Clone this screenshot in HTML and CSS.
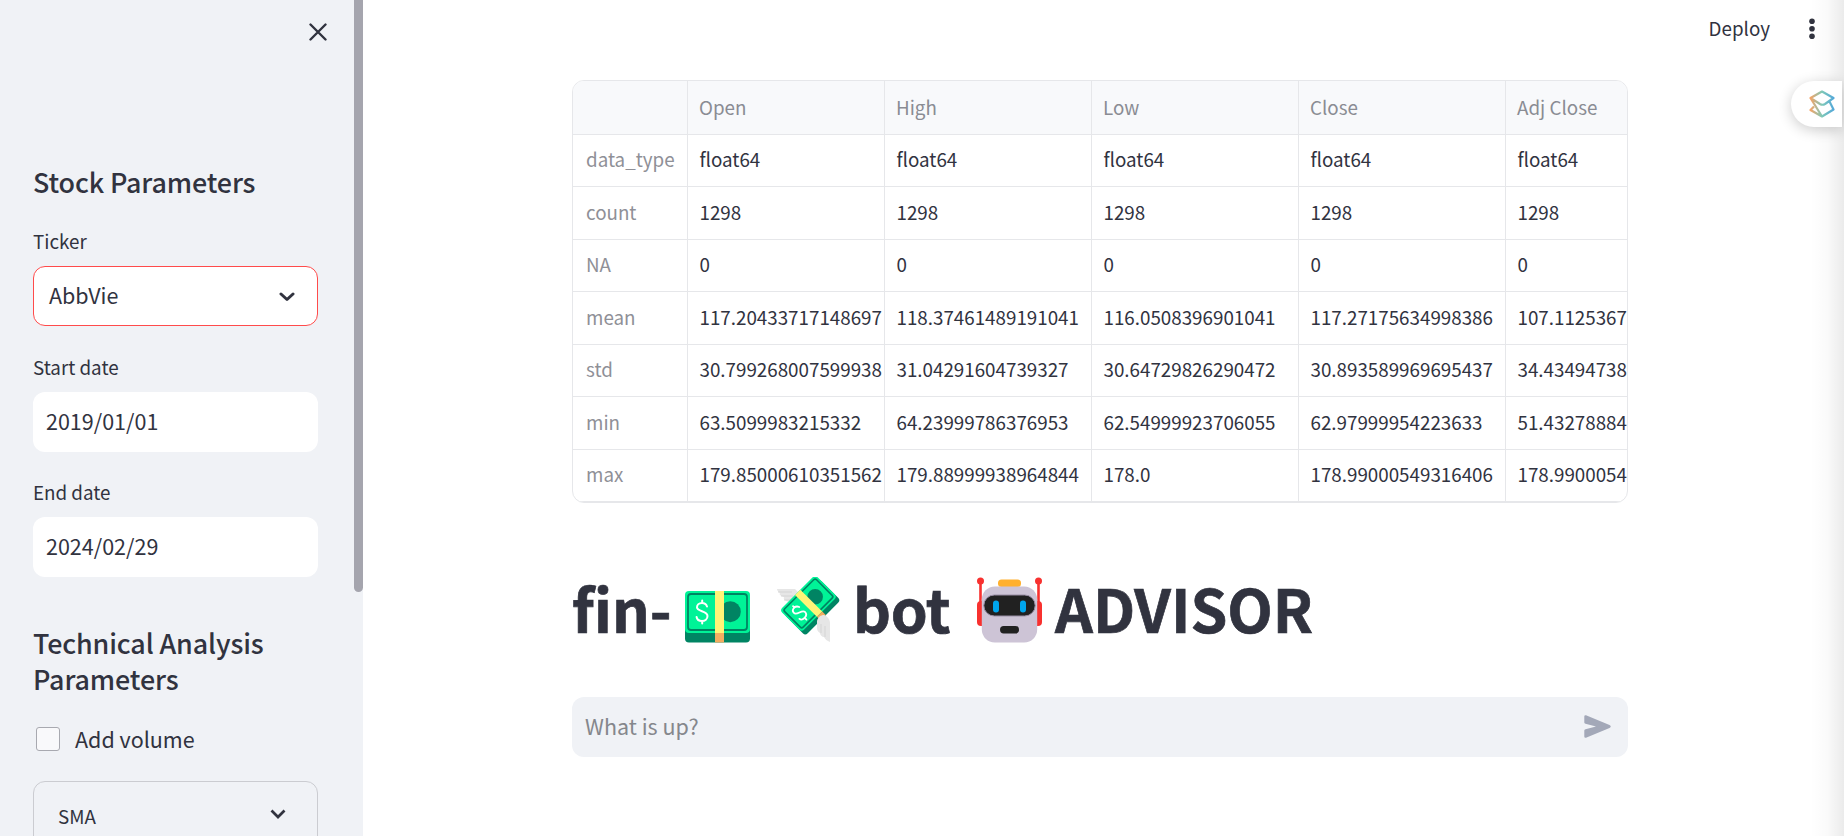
FILE: index.html
```html
<!DOCTYPE html>
<html lang="en">
<head>
<meta charset="utf-8">
<title>fin-bot advisor</title>
<link rel="stylesheet" href="styles.css">
</head>
<body>
<div class="app">
  <aside class="sidebar">
    <div class="sidebar-body">
      <div class="sidebar-top">
        <svg class="close" viewBox="0 0 18 18"><path d="M1.5 1.5 16.5 16.5M16.5 1.5 1.5 16.5"/></svg>
      </div>
      <h2 class="side-title">Stock Parameters</h2>
      <div class="field">
        <label class="label">Ticker</label>
        <div class="control select"><span>AbbVie</span><svg class="chevron" viewBox="0 0 16 10"><path d="M2 2 8 7.5 14 2"/></svg></div>
      </div>
      <div class="field">
        <label class="label">Start date</label>
        <div class="control">2019/01/01</div>
      </div>
      <div class="field">
        <label class="label">End date</label>
        <div class="control">2024/02/29</div>
      </div>
      <h2 class="side-title technical">Technical Analysis Parameters</h2>
      <div class="check"><span class="box"></span><span>Add volume</span></div>
      <div class="expander"><span>SMA</span><svg class="chevron thin" viewBox="0 0 16 10"><path d="M1.5 1.5 8 8 14.5 1.5"/></svg></div>
    </div>
    <div class="scroll-thumb"></div>
  </aside>
  <main class="main">
    <header class="toolbar">
      <span class="deploy">Deploy</span>
      <svg class="dots" viewBox="0 0 6 22"><circle cx="3" cy="3.2" r="2.8"/><circle cx="3" cy="10.7" r="2.8"/><circle cx="3" cy="18.2" r="2.8"/></svg>
    </header>
    <div class="content">
      <div class="frame">
        <div class="row head"><span></span><span>Open</span><span>High</span><span>Low</span><span>Close</span><span>Adj Close</span></div>
        <div class="row"><span>data_type</span><span>float64</span><span>float64</span><span>float64</span><span>float64</span><span>float64</span></div>
        <div class="row"><span>count</span><span>1298</span><span>1298</span><span>1298</span><span>1298</span><span>1298</span></div>
        <div class="row"><span>NA</span><span>0</span><span>0</span><span>0</span><span>0</span><span>0</span></div>
        <div class="row"><span>mean</span><span>117.20433717148697</span><span>118.37461489191041</span><span>116.0508396901041</span><span>117.27175634998386</span><span>107.1125367</span></div>
        <div class="row"><span>std</span><span>30.799268007599938</span><span>31.04291604739327</span><span>30.64729826290472</span><span>30.893589969695437</span><span>34.43494738</span></div>
        <div class="row"><span>min</span><span>63.5099983215332</span><span>64.23999786376953</span><span>62.54999923706055</span><span>62.97999954223633</span><span>51.43278884</span></div>
        <div class="row"><span>max</span><span>179.85000610351562</span><span>179.88999938964844</span><span>178.0</span><span>178.99000549316406</span><span>178.9900054</span></div>
      </div>
      <h1 class="title">
        <span class="w-fin">fin-</span>
        <svg class="emoji cash" viewBox="0 0 65 66">
          <rect y="30" width="65" height="35.500" rx="4" fill="#008463"/>
          <rect y="14" width="65" height="42" rx="4" fill="#00f397"/>
          <rect x="3" y="17" width="59" height="36" rx="3" fill="none" stroke="#008463" stroke-width="1.800"/>
          <circle cx="45.300" cy="34.700" r="10.500" fill="#008463"/>
          <rect x="30" y="14" width="9" height="42" fill="#fff478"/>
          <rect x="30" y="56" width="9" height="9.500" fill="#f3ad61"/>
          <path d="M22 29.500C21 26.500 18 26 17 26C14 26 12 28 12 30.300C12 35 22.500 33.500 22.500 39C22.500 42 20 44 17 44C14 44 12 42.500 11.600 40M17.200 23.500V26M17.200 44V46.500" fill="none" stroke="#fff" stroke-width="2" stroke-linecap="round"/>
        </svg>
        <svg class="emoji wings" viewBox="0 0 63 66">
          <path d="M0 12H18L26 20 12 25C8 24 6 22 7 20C3 19 2 17 3 16C1 15 0 13 0 12Z" fill="#e6e6e6"/>
          <path d="M1 15H15M4 19H16M7 23H14" stroke="#cfcfcf" stroke-width=".8"/>
          <g transform="translate(32.500 27.500) rotate(-45)">
            <rect x="-25" y="-11" width="50" height="30" rx="3.500" fill="#008463"/>
            <rect x="-25" y="-17" width="50" height="31" rx="3.500" fill="#00f397"/>
            <rect x="-22.500" y="-14.500" width="45" height="26" rx="2" fill="none" stroke="#008463" stroke-width="1.700"/>
            <circle cx="9.500" cy="-1.500" r="7.800" fill="#008463"/>
            <rect x="-3.500" y="-17" width="7.500" height="31" fill="#fff478"/>
            <rect x="-3.500" y="14" width="7.500" height="5" fill="#f3ad61"/>
            <path d="M-9 -5.500C-10 -8 -12 -8.500 -13 -8.500C-15.500 -8.500 -17 -7 -17 -5C-17 -1 -8.500 -2 -8.500 2C-8.500 4.500 -10.500 6 -13 6C-15.500 6 -17 4.800 -17.300 3M-12.800 -10.500V-8.500M-12.800 6V8.500" fill="none" stroke="#fff" stroke-width="1.800" stroke-linecap="round"/>
          </g>
          <path d="M40 44C41 40 44 38 47 38C50 39 53 42 53 46V65C50 64 48 62 47 60C45 60 43 58 43 56C41 55 40 53 40 51Z" fill="#e6e6e6"/>
          <path d="M44 47V56M48 49V60" stroke="#cfcfcf" stroke-width=".8"/>
        </svg>
        <span class="w-bot">bot</span>
        <svg class="emoji robot" viewBox="0 0 65 66">
          <path d="M3.500 4V28M61.500 4V28" stroke="#f8312f" stroke-width="2.600"/>
          <circle cx="3.500" cy="4" r="3.500" fill="#f8312f"/><circle cx="61.500" cy="4" r="3.500" fill="#f8312f"/>
          <rect y="24" width="12" height="25" rx="4" fill="#f8312f"/><rect x="53" y="24" width="12" height="25" rx="4" fill="#f8312f"/>
          <rect x="21" y="2.500" width="23" height="7.500" rx="3.500" fill="#ffb02e"/>
          <rect x="4.800" y="9.500" width="55.400" height="56" rx="13" fill="#cdc4d6"/>
          <rect x="6.800" y="18" width="51.400" height="21" rx="10.500" fill="#212121" stroke="#998ea4" stroke-width="1"/>
          <rect x="16" y="23.500" width="6" height="12" rx="3" fill="#00a6ed"/><rect x="43" y="23.500" width="6" height="12" rx="3" fill="#00a6ed"/>
          <rect x="23" y="49" width="19" height="7.500" rx="3.700" fill="#212121"/>
        </svg>
        <span>ADVISOR</span>
      </h1>
      <div class="chat"><span>What is up?</span><svg class="send" viewBox="0 0 27 23"><path d="M2 .3 25.500 10C27.200 10.700 27.200 12.300 25.500 13L2 22.700Q.3 23 .3 21.500V15.500Q.3 14.500 1.500 14.200L12 11.500 1.500 8.800Q.3 8.500 .3 7.500V1.500Q.3 0 2 .3Z"/></svg></div>
    </div>
  </main>
</div>
<div class="edge-shade"></div>
<div class="edge-tab">
  <svg viewBox="0 0 26 28"><defs><linearGradient id="g" x1="0" x2="1"><stop offset="0" stop-color="#f3a467"/><stop offset=".5" stop-color="#7fc9b8"/><stop offset="1" stop-color="#55a9d8"/></linearGradient></defs>
  <path d="M1.500 8 13 1.500 24.500 8 16 14Q13.500 15.500 11 14ZM5 16.500 1.500 20 13 26.500 24.500 19.500 20.500 11.500M1.500 8 13 26.500"/></svg>
</div>
</body>
</html>
```
FILE: styles.css
```css
* { box-sizing: border-box; }

body {
  margin: 0;
  height: 836px;
  overflow: hidden;
  position: relative;
  background: #fff;
  color: #31333f;
  font-family: "Noto Sans CJK SC", "Noto Sans", sans-serif;
  font-size: 21.5px;
}

h1, h2 { margin: 0; }

.app { display: flex; height: 836px; }

/* Sidebar */
.sidebar {
  display: flex;
  flex: 0 0 363px;
  justify-content: space-between;
  background: #f0f2f6;
  overflow: hidden;
}
.sidebar-body { width: 318px; padding-left: 33px; }
.sidebar-top { display: flex; justify-content: flex-end; height: 164px; padding-top: 23px; }
.close { width: 18px; height: 18px; margin-right: -9px; fill: none; stroke: #31333f; stroke-width: 2.4; stroke-linecap: round; }
.side-title { font-size: 26.86px; line-height: 36px; font-weight: 500; letter-spacing: -.12px; margin-bottom: 25px; }
.field { margin-bottom: 24.5px; }
.label { display: block; font-size: 18.8px; line-height: 32px; margin-bottom: 9px; }
.control {
  display: flex;
  align-items: center;
  justify-content: space-between;
  height: 60px;
  padding: 0 13px 3px;
  border-radius: 12px;
  background: #fff;
}
.select { border: 1.5px solid #ff4b4b; padding: 0 22px 3px 15px; }
.chevron { width: 16px; height: 10px; fill: none; stroke: #31333f; stroke-width: 3; stroke-linecap: round; stroke-linejoin: round; position: relative; top: 2px; }
.thin { stroke-width: 2.7; stroke-linecap: butt; stroke-linejoin: miter; top: -2px; }
.technical { margin-top: 48px; margin-bottom: 24px; }
.check { display: flex; align-items: center; gap: 15px; height: 36px; padding-left: 3px; }
.check span:last-child { position: relative; top: -1px; }
.box { width: 24px; height: 24px; border: 1.5px solid #a8a9b0; border-radius: 3px; background: #f9f9fb; }
.expander {
  display: flex;
  align-items: center;
  justify-content: space-between;
  height: 72px;
  margin-top: 24px;
  padding: 0 31px 3px 24px;
  border: 1.5px solid #cbccd1;
  border-radius: 12px;
  font-size: 18.8px;
}
.scroll-thumb { width: 9px; height: 592px; border-radius: 0 0 5px 5px; background: #a5a5ae; }

/* Main column */
.main { flex: 1; min-width: 0; }
.toolbar {
  display: flex;
  align-items: center;
  justify-content: flex-end;
  gap: 39px;
  height: 80px;
  padding: 0 29px 22px 0;
  font-size: 18.8px;
}
.deploy { padding-bottom: 4px; }
.dots { width: 6px; height: 22px; fill: #31333f; }
.content { width: 1056px; margin-left: 209px; }

/* Data table */
.frame { height: 423px; border: 1px solid #e6e7ea; border-radius: 12px; overflow: hidden; font-size: 18.8px; }
.row { display: grid; grid-template-columns: 115px 197px 207px 207px 207px 122px; height: 52.5px; }
.row span {
  display: flex;
  align-items: center;
  padding: 0 0 3px 11.5px;
  border-right: 1.5px solid #e6e7ea;
  border-bottom: 1.5px solid #e6e7ea;
  white-space: nowrap;
}
.row span:first-child { padding-left: 13px; color: #8f9097; }
.row span:last-child { border-right: 0; }
.row.head { height: 53.5px; background: #f8f9fb; color: #8a8c93; }
.row.head span { padding-left: 11px; padding-bottom: 2px; }

/* Page title */
.title { display: flex; align-items: center; height: 66px; margin-top: 74px; font-size: 59.1px; line-height: 66px; font-weight: 700; white-space: nowrap; -webkit-text-stroke: .7px #31333f; }
.w-fin { width: 113px; height: 68px; }
.w-bot { width: 121px; height: 68px; letter-spacing: -.3px; }
.title span { display: flex; align-items: center; padding-bottom: 6px; }
.emoji { flex: none; height: 66px; }
.cash { width: 65px; margin-right: 27px; }
.wings { width: 63px; margin-right: 13px; }
.robot { width: 65px; margin-left: 3px; margin-right: 13px; }

/* Chat input */
.chat {
  display: flex;
  align-items: center;
  justify-content: space-between;
  height: 60px;
  margin-top: 54px;
  padding: 0 17px 3px 13px;
  border-radius: 12px;
  background: #f0f2f6;
  color: #85878c;
}
.send { width: 27px; height: 23px; fill: #a3a8b8; position: relative; top: 1px; }

/* Browser-extension tab over the right edge */
.edge-shade { position: absolute; top: 0; right: 0; width: 34px; height: 836px; background: linear-gradient(90deg, rgba(0,0,0,0), rgba(0,0,0,.02) 50%, rgba(0,0,0,.08)); }
.edge-tab {
  position: absolute;
  top: 81px;
  right: 2px;
  width: 51px;
  height: 46px;
  padding: 9px 0 0 18px;
  border-radius: 23px 0 0 23px;
  background: #fff;
  box-shadow: 0 3px 14px rgba(0,0,0,.2);
}
.edge-tab svg { display: block; width: 26px; height: 28px; fill: none; stroke: url(#g); stroke-width: 2.2; stroke-linejoin: round; }
```
